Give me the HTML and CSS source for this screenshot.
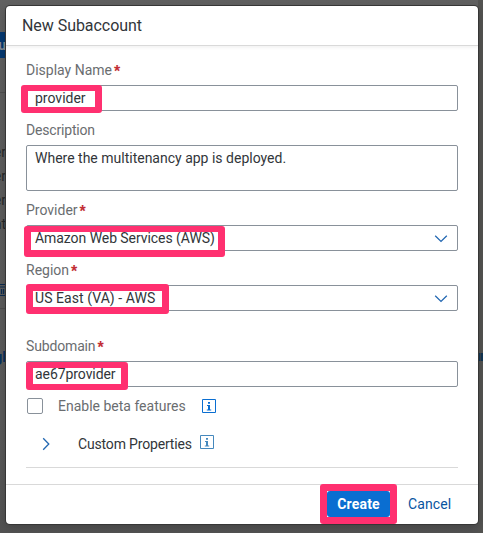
FILE: index.html
```html
<!DOCTYPE html>
<html lang="en">
<head>
<meta charset="utf-8">
<title>New Subaccount</title>
<link rel="stylesheet" href="styles.css">
</head>
<body>
<div class="page" aria-hidden="true">
  <div class="page-left">
    <div class="page-bar"><span class="page-button">ou</span></div>
    <div class="page-list"><span>er</span><span>er</span><span>er</span><span>nt</span></div>
    <div class="page-tools">
      <svg width="6" height="16" viewBox="0 0 6 16"><path d="M0 2.5h5M0 5h6M0 13.5h6M1.5 7v5M3.5 7v5M5.5 7v5" fill="none" stroke="#0b2b50" stroke-width="1.2"/></svg>
    </div>
    <div class="page-link">gl</div>
  </div>
  <div class="page-right"><span class="page-mark"></span></div>
</div>
<main class="dialog">
  <header class="header"><h1 class="title">New Subaccount</h1></header>
  <form class="content">
    <div class="field">
      <label class="label"><span>Display Name</span><b class="star">*</b></label>
      <div class="input"><span class="v-name">provider</span><i class="mark mark-name"></i></div>
    </div>
    <div class="field">
      <label class="label"><span class="t-desc">Description</span></label>
      <div class="input area"><span class="v-desc">Where the multitenancy app is deployed.</span></div>
    </div>
    <div class="field">
      <label class="label"><span>Provider</span><b class="star">*</b></label>
      <div class="input"><span class="v-provider">Amazon Web Services (AWS)</span><svg class="arrow" width="14" height="10" viewBox="0 0 14 10"><path d="M1.2 1.8L7 7.4l5.8-5.6"/></svg><i class="mark mark-provider"></i></div>
    </div>
    <div class="field">
      <label class="label"><span>Region</span><b class="star">*</b></label>
      <div class="input"><span class="v-region">US East (VA) - AWS</span><svg class="arrow" width="14" height="10" viewBox="0 0 14 10"><path d="M1.2 1.8L7 7.4l5.8-5.6"/></svg><i class="mark mark-region"></i></div>
    </div>
    <div class="field spaced">
      <label class="label"><span class="t-sub">Subdomain</span><b class="star">*</b></label>
      <div class="input"><span class="v-sub">ae67provider</span><i class="mark mark-sub"></i></div>
    </div>
    <div class="check-row">
      <span class="checkbox"></span>
      <span class="check-label">Enable beta features</span>
      <svg class="info" width="14" height="14" viewBox="0 0 14 14"><path d="M.5.5h13v13H.5z" fill="none" stroke="currentColor"/><path d="M6 3h2v1.7H6zM5 6h3v4.5h1.2v1H4.8v-1H6V7H5z" fill="currentColor"/></svg>
    </div>
    <div class="panel">
      <svg class="expand" width="8" height="14" viewBox="0 0 8 14"><path d="M1.2 1.2L6.8 7l-5.6 5.8"/></svg>
      <span class="panel-title">Custom Properties</span>
      <svg class="info muted" width="14" height="14" viewBox="0 0 14 14"><path d="M.5.5h13v13H.5z" fill="none" stroke="currentColor"/><path d="M6 3h2v1.7H6zM5 6h3v4.5h1.2v1H4.8v-1H6V7H5z" fill="currentColor"/></svg>
    </div>
  </form>
  <footer class="footer">
    <div class="primary">Create<i class="mark mark-create"></i></div>
    <div class="cancel">Cancel</div>
  </footer>
</main>
</body>
</html>
```
FILE: styles.css
```css
* { box-sizing: border-box; }
body {
  margin: 0;
  width: 483px;
  height: 533px;
  overflow: hidden;
  padding: 6px 5px 9px 6px;
  background: #5a5a5a;
  font-family: Roboto, "Liberation Sans", sans-serif;
  font-size: 14px;
  color: #32363a;
}
.page {
  position: absolute;
  inset: 0;
  display: flex;
  justify-content: space-between;
  overflow: hidden;
  background: linear-gradient(#606060 0, #5c5c5c 92px, #595959 420px, #525252 533px);
}
.page-left { width: 6px; overflow: hidden; color: #242729; }
.page-bar { height: 93px; padding-top: 32px; border-bottom: 1px solid #4d4d4d; }
.page-button { display: flex; justify-content: flex-end; height: 26px; line-height: 26px; background: #05386f; color: #858b92; font-weight: bold; }
.page-list { display: flex; flex-direction: column; align-items: flex-end; padding-top: 47px; height: 189px; }
.page-list span { height: 24px; line-height: 24px; }
.page-tools { height: 27px; border-bottom: 1px solid #4d4d4d; }
.page-link { display: flex; justify-content: flex-end; margin-top: 38px; color: #082f5b; font-weight: bold; line-height: 20px; }
.page-right { width: 5px; padding-top: 353px; background: #535351; }
.page-mark { display: block; height: 8px; border-left: 2px solid #123653; border-right: 2px solid #123653; background: #34414d; }

.dialog {
  position: relative;
  display: flex;
  flex-direction: column;
  width: 472px;
  height: 518px;
  background: #fff;
  border-radius: 4px;
  box-shadow: 0 0 0 1px #363636, 0 3px 10px rgba(0, 0, 0, .2);
}
.header {
  height: 40px;
  padding-left: 16px;
  border-bottom: 1px solid #d9d9d9;
  box-shadow: 0 2px 3px rgba(0, 0, 0, .05);
}
.title { margin: 0; font-size: 16px; font-weight: 400; line-height: 39px; letter-spacing: -.05px; }
.content { display: flex; flex-direction: column; height: 438px; padding: 14px 20px 0; }
.label { display: flex; height: 25px; line-height: 21px; color: #6a6d70; white-space: nowrap; }
.t-desc { letter-spacing: -.18px; }
.t-sub { letter-spacing: -.15px; }
.star { color: #c22f36; font: bold 16px/23px "Liberation Sans", sans-serif; margin-left: 2px; }
.input {
  position: relative;
  display: flex;
  justify-content: space-between;
  height: 26px;
  padding-left: 8px;
  border: 1px solid #89919a;
  border-radius: 2px;
  line-height: 25px;
  white-space: nowrap;
}
.v-provider { letter-spacing: -.06px; }
.v-region { letter-spacing: .06px; }
.v-sub { letter-spacing: -.07px; }
.field { height: 60px; flex: none; }
.field:nth-child(2) { height: 80px; }
.field.spaced { height: 42px; margin-top: 16px; }
.area { height: 46px; line-height: 24px; }
.arrow { margin: 8px 9px 0 0; }
.arrow path, .expand path { fill: none; stroke: #2368b2; stroke-width: 1.3; }
.check-row { display: flex; align-items: center; height: 18px; margin-top: 19px; color: #6a6d70; flex: none; }
.checkbox { width: 16px; height: 16px; margin-left: 1px; border: 1px solid #89919a; border-radius: 2px; }
.check-label { width: 144px; margin-left: 15px; }
.info { color: #0a6ed1; }
.info.muted { color: #4588bd; margin-top: -2px; }
.panel { display: flex; align-items: center; height: 53px; flex: none; padding: 5px 0 0 16px; border-bottom: 1px solid #d9d9d9; }
.panel { align-items: flex-start; padding-top: 22px; }
.panel-title { width: 114px; margin: -1px 8px 0 28px; line-height: 16px; white-space: nowrap; letter-spacing: -.17px; }
.footer { display: flex; height: 40px; padding: 6px 27px 0 0; justify-content: flex-end; gap: 18px; border-top: 1px solid #d9d9d9; }
.primary { position: relative; width: 63px; height: 26px; line-height: 26px; text-align: center; background: #0a6ed1; border-radius: 3px; color: #fff; font-weight: 700; letter-spacing: .2px; }
.cancel { width: 43px; line-height: 26px; color: #0854a0; letter-spacing: .1px; }

.mark { position: absolute; border: 7px solid #ff3070; border-radius: 3px; }
.mark-name { left: -6px; top: -1px; width: 81px; height: 28px; border-width: 6px 7px; }
.mark-provider { left: -3px; top: 0; width: 201px; height: 31px; border-width: 6px 7px 7px; }
.mark-region { left: -1px; top: -2px; width: 143px; height: 30px; }
.mark-sub { left: -1px; top: 0; width: 102px; height: 28px; border-width: 6px 7px; }
.mark-create { left: -7px; top: -7px; width: 77px; height: 40px; }
```
